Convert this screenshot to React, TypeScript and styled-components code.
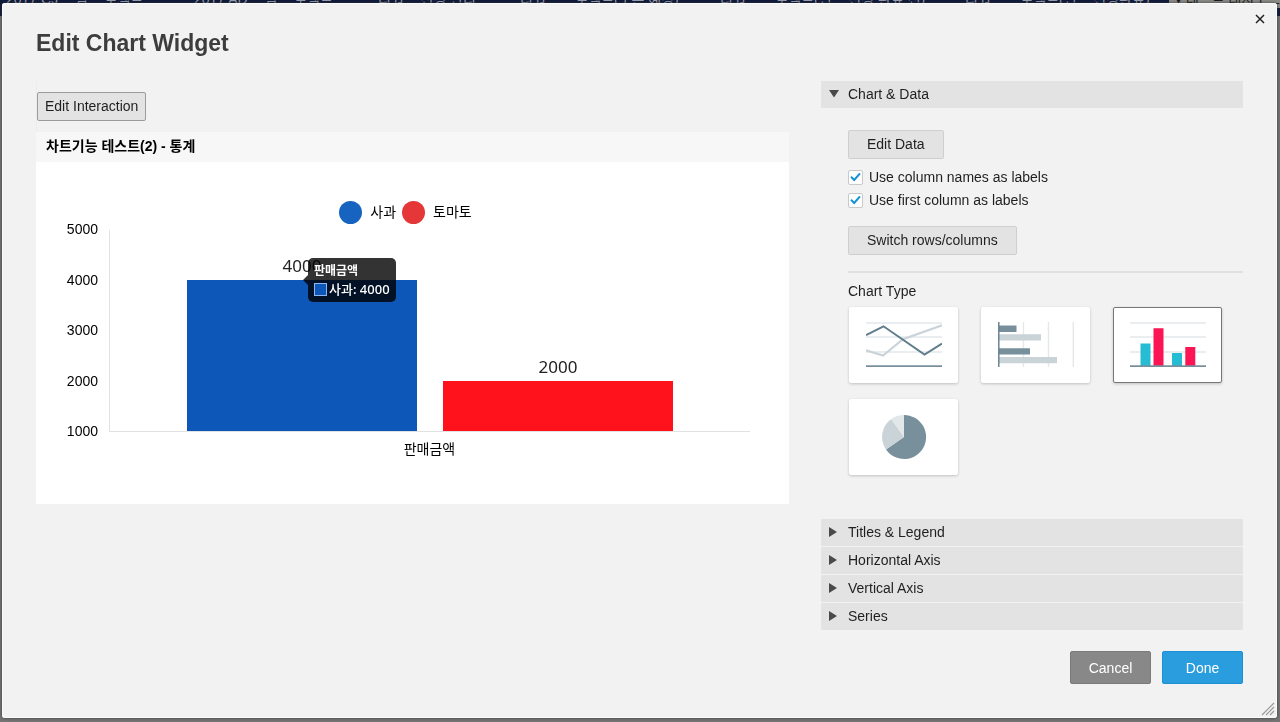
import React, { useState } from "react";
import styled, { createGlobalStyle, css } from "styled-components";

const GlobalStyle = createGlobalStyle`
  * { box-sizing: border-box; }
  body {
    margin: 0;
    background: #747474;
    color: #1f1f1f;
    font-family: "Liberation Sans", "Noto Sans CJK KR", sans-serif;
    font-size: 14px;
    line-height: 20px;
  }
  button, input { font: inherit; color: inherit; margin: 0; }
  h1, h2, h3, p { margin: 0; font-weight: normal; font-size: inherit; }
`;

const Page = styled.div`
  min-height: 100vh;
  overflow: hidden;
`;

const TabBar = styled.nav`
  display: flex;
  height: 16px;
  align-items: flex-end;
  padding-bottom: 8px;
  background: #0f1a3a;
  white-space: nowrap;
  overflow: hidden;
`;

const Tab = styled.a<{ $width: number; $active?: boolean }>`
  flex: 0 0 ${(p) => p.$width}px;
  padding-left: 6px;
  font-size: 14px;
  line-height: 18px;
  text-decoration: none;
  color: ${(p) => (p.$active ? "#1c1c1c" : "#9a9fae")};
  background: ${(p) => (p.$active ? "#8b8b88" : "transparent")};
`;

const Dialog = styled.div`
  position: fixed;
  inset: 3px 3px 4px 2px;
  overflow: hidden;
  padding: 26px 34px 32px;
  background: #f2f2f2;
  border-radius: 3px;
  box-shadow: inset 0 0 0 1px #fafafa, 0 0 3px #333333;
`;

const Title = styled.h1`
  font-size: 23px;
  line-height: 28px;
  font-weight: bold;
  color: #3d3d3d;
`;

const Close = styled.button`
  position: absolute;
  top: 8px;
  right: 9px;
  display: flex;
  padding: 3px;
  border: 0;
  background: none;
`;

const ResizeGrip = styled.svg`
  position: absolute;
  right: 2px;
  bottom: 2px;
`;

const Columns = styled.div`
  display: flex;
  gap: 32px;
  margin-top: 24px;
`;

const Preview = styled.section`
  flex: 1;
  min-width: 0;
`;

const PreviewTools = styled.div`
  padding: 11px 0;
  border-left: 1px solid #ececec;
`;

const Settings = styled.section`
  flex: 0 0 422px;
`;

const Button = styled.button<{ $compact?: boolean }>`
  height: 29px;
  padding: 0 ${(p) => (p.$compact ? 7 : 18)}px 2px;
  border: 1px solid ${(p) => (p.$compact ? "#9b9b9b" : "#cfcfcf")};
  border-radius: 2px;
  background: #e3e3e3;
`;

const ActionButton = styled.button<{ $primary?: boolean }>`
  width: 81px;
  height: 33px;
  padding: 0;
  border: 1px solid ${(p) => (p.$primary ? "#1b90d2" : "#7a7a7a")};
  border-radius: 2px;
  background: ${(p) => (p.$primary ? "#2a9ddf" : "#888888")};
  color: #ffffff;
`;

const WidgetTitle = styled.h2`
  padding: 0 10px 2px;
  background: #f7f7f7;
  color: #000000;
  font-size: 14px;
  font-weight: bold;
  line-height: 28px;
`;

const Chart = styled.div`
  padding: 38px 39px 45px 30px;
  background: #ffffff;
  color: #000000;
`;

const Legend = styled.div`
  display: flex;
  justify-content: center;
  gap: 6px;
  margin-right: 5px;
  margin-bottom: 6px;
  height: 24px;
`;

const LegendItem = styled.span`
  display: flex;
  align-items: center;
  gap: 8px;
  font-size: 14px;
  line-height: 24px;
`;

const Dot = styled.span<{ $color: string }>`
  width: 23px;
  height: 23px;
  border-radius: 50%;
  background: ${(p) => p.$color};
`;

const PlotGrid = styled.div`
  display: grid;
  grid-template-columns: 32px 1fr;
  column-gap: 11px;
`;

const Scale = styled.div`
  display: flex;
  flex-direction: column;
  justify-content: space-between;
  margin: -11px 0 -9px;
  text-align: right;
`;

const Plot = styled.div`
  display: flex;
  justify-content: center;
  align-items: flex-end;
  gap: 4%;
  height: 202px;
  border-left: 1px solid #e2e2e2;
  border-bottom: 1px solid #e2e2e2;
`;

const Bar = styled.div<{ $color: string }>`
  position: relative;
  width: 36%;
  background: ${(p) => p.$color};
`;

const BarValue = styled.span`
  position: absolute;
  bottom: 100%;
  width: 100%;
  text-align: center;
  font-family: "Noto Sans", sans-serif;
  font-size: 17px;
  line-height: 28px;
  color: #222222;
`;

const Category = styled.p`
  grid-column: 2;
  padding-top: 7px;
  text-align: center;
`;

const Tooltip = styled.div`
  position: absolute;
  z-index: 1;
  top: -22px;
  left: calc(50% + 6px);
  padding: 4px 6px;
  border-radius: 5px;
  background: rgba(0, 0, 0, 0.8);
  color: #ffffff;
  font-family: "Noto Sans", "Noto Sans CJK KR", sans-serif;
  font-size: 13px;
  font-weight: 500;
  line-height: 18px;
  white-space: nowrap;

  &::before {
    content: "";
    position: absolute;
    top: 17px;
    right: 100%;
    border: 5px solid transparent;
    border-left: 0;
    border-right-color: rgba(0, 0, 0, 0.8);
  }
`;

const TooltipTitle = styled.strong`
  display: block;
  font-size: 12px;
`;

const TooltipRow = styled.span`
  display: flex;
  align-items: center;
  gap: 2px;
`;

const Swatch = styled.i`
  width: 13px;
  height: 13px;
  border: 1px solid #8db7ee;
  background: #0c57b8;
`;

const PanelHeader = styled.button`
  display: flex;
  align-items: center;
  gap: 8px;
  width: 100%;
  height: 27px;
  padding: 0 7px 1px;
  margin-bottom: 1px;
  border: 0;
  background: #e3e3e3;
  text-align: left;
`;

const Arrow = styled.svg`
  flex: none;
`;

const PanelBody = styled.div`
  padding: 21px 0 44px 27px;
`;

const Checks = styled.div`
  display: grid;
  gap: 3px;
  padding: 8px 0 16px;
`;

const CheckLabel = styled.label`
  display: flex;
  align-items: center;
  gap: 6px;
`;

const CheckBox = styled.span`
  display: grid;
  place-items: center;

  & > * { grid-area: 1 / 1; }
  & > svg { pointer-events: none; z-index: 1; }
`;

const CheckInput = styled.input`
  appearance: none;
  width: 15px;
  height: 15px;
  border: 1px solid #c9c9c9;
  border-radius: 2px;
  background: #ffffff;
`;

const Types = styled.fieldset`
  min-width: 0;
  margin: 16px 0 0;
  padding: 8px 0 0;
  border: 0;
  border-top: 2px solid #e0e0e0;
`;

const TypeGrid = styled.div`
  display: grid;
  grid-template-columns: repeat(3, 109px);
  gap: 16px 23px;
  padding: 6px 1px 0;
`;

const TypeCard = styled.button<{ $selected: boolean }>`
  display: flex;
  align-items: center;
  justify-content: center;
  height: 76px;
  padding: 0;
  border: 1px solid #ffffff;
  border-radius: 2px;
  background: #ffffff;
  box-shadow: 0 1px 3px rgba(0, 0, 0, 0.2);
  ${(p) => p.$selected && css`border-color: #777777;`}
`;

const Footer = styled.footer`
  display: flex;
  justify-content: flex-end;
  gap: 11px;
  padding-top: 20px;
`;

const tabs = [
  { label: "2017 CJ 드림 프로젝트", width: 188 },
  { label: "2017 AD 드림 프로젝트", width: 184 },
  { label: "리워드 신청 관리", width: 142 },
  { label: "리워드 프로젝트(오픈 예정)", width: 200 },
  { label: "리워드 프로젝트(펀드 신청 완료 전)", width: 245 },
  { label: "리워드 프로젝트(펀드 신청완료)", width: 210 },
  { label: "▾ 테스트 대시보드", width: 140, active: true },
];

const MIN = 1000;
const MAX = 5000;
const ticks = [5000, 4000, 3000, 2000, 1000];
const series = [
  { name: "사과", value: 4000, color: "#0c57b8", dot: "#1763c0" },
  { name: "토마토", value: 2000, color: "#ff121c", dot: "#e53638" },
];

const DARK = "#78909c";
const LIGHT = "#c9d3d8";
const RULE = "#e3e9eb";

const Rules = () => (
  <path d="M0 1H76M0 15H76M0 30H76" stroke={RULE} strokeWidth="1.3" />
);

const chartTypes = [
  {
    id: "Line chart",
    art: (
      <>
        <Rules />
        <path d="M0 28.3L17 33.6L37 17.3L76 3.3" stroke={LIGHT} strokeWidth="2.1" />
        <path d="M0 13L17.5 4.3L58.5 32.6L76 21.6" stroke="#607d8b" strokeWidth="2" />
        <path d="M0 44.2H76" stroke={DARK} strokeWidth="1.8" />
      </>
    ),
  },
  {
    id: "Bar chart",
    art: (
      <>
        <path d="M25.5 0V45M50.5 0V45M75.3 0V45" stroke={RULE} strokeWidth="1.4" />
        <path d="M1 3.5H18.5V10H1zM1 26.3H32V32.5H1z" fill={DARK} />
        <path d="M1 12.3H43V18.5H1zM1 35H59V41.2H1z" fill={LIGHT} />
        <path d="M.8 0V45" stroke="#607d8b" strokeWidth="1.4" />
      </>
    ),
  },
  {
    id: "Column chart",
    art: (
      <>
        <Rules />
        <path d="M10.5 21.5H20.5V44H10.5zM42 31H52V44H42z" fill="#26bdd4" />
        <path d="M23.5 6.3H33.5V44H23.5zM55.3 25H65.3V44H55.3z" fill="#fc1555" />
        <path d="M0 44.2H76" stroke={DARK} strokeWidth="1.8" />
      </>
    ),
  },
  {
    id: "Pie chart",
    art: (
      <>
        <path d="M38 23V1A22 22 0 1 1 20 35.5Z" fill={DARK} />
        <path d="M38 23L20 35.5A22 22 0 0 1 25.2 5.1Z" fill={LIGHT} />
        <path d="M38 23L25.2 5.1A22 22 0 0 1 38 1Z" fill="#e2e7e9" />
      </>
    ),
  },
];

function Panel({ title, open }: { title: string; open?: boolean }) {
  return (
    <h3>
      <PanelHeader type="button" aria-expanded={!!open}>
        <Arrow width="12" height="12" viewBox="0 0 12 12" fill="#4a4a4a">
          <path d={open ? "M1 2H11L6 9.5Z" : "M1 1L9 6L1 11Z"} />
        </Arrow>
        {title}
      </PanelHeader>
    </h3>
  );
}

function Check({ label }: { label: string }) {
  const [on, setOn] = useState(true);
  return (
    <CheckLabel>
      <CheckBox>
        <CheckInput type="checkbox" checked={on} onChange={() => setOn(!on)} />
        {on && (
          <svg width="11" height="10" viewBox="0 0 11 10" fill="none" stroke="#1491d9" strokeWidth="2">
            <path d="M1 4.8L4.2 8L10 1.3" />
          </svg>
        )}
      </CheckBox>
      {label}
    </CheckLabel>
  );
}

export default function App() {
  const [type, setType] = useState("Column chart");
  return (
    <Page>
      <GlobalStyle />
      <TabBar>
        {tabs.map((t) => (
          <Tab key={t.label} href="#" $width={t.width} $active={t.active}>
            {t.label}
          </Tab>
        ))}
      </TabBar>
      <Dialog role="dialog" aria-labelledby="dialog-title">
        <Title id="dialog-title">Edit Chart Widget</Title>
        <Close type="button" aria-label="Close">
          <svg width="10" height="10" viewBox="0 0 10 10" stroke="#222222" strokeWidth="1.5">
            <path d="M1 1L9 9M9 1L1 9" />
          </svg>
        </Close>
        <Columns>
          <Preview>
            <PreviewTools>
              <Button type="button" $compact>Edit Interaction</Button>
            </PreviewTools>
            <WidgetTitle>차트기능 테스트(2) - 통계</WidgetTitle>
            <Chart>
              <Legend>
                {series.map((s) => (
                  <LegendItem key={s.name}>
                    <Dot $color={s.dot} />
                    {s.name}
                  </LegendItem>
                ))}
              </Legend>
              <PlotGrid>
                <Scale>
                  {ticks.map((t) => (
                    <span key={t}>{t}</span>
                  ))}
                </Scale>
                <Plot>
                  {series.map((s, i) => (
                    <Bar
                      key={s.name}
                      $color={s.color}
                      style={{ height: `${((s.value - MIN) / (MAX - MIN)) * 100}%` }}
                    >
                      <BarValue>{s.value}</BarValue>
                      {i === 0 && (
                        <Tooltip role="tooltip">
                          <TooltipTitle>판매금액</TooltipTitle>
                          <TooltipRow>
                            <Swatch />
                            {s.name}: {s.value}
                          </TooltipRow>
                        </Tooltip>
                      )}
                    </Bar>
                  ))}
                </Plot>
                <Category>판매금액</Category>
              </PlotGrid>
            </Chart>
          </Preview>
          <Settings>
            <Panel title="Chart & Data" open />
            <PanelBody>
              <Button type="button">Edit Data</Button>
              <Checks>
                <Check label="Use column names as labels" />
                <Check label="Use first column as labels" />
              </Checks>
              <Button type="button">Switch rows/columns</Button>
              <Types aria-labelledby="chart-type">
                <p id="chart-type">Chart Type</p>
                <TypeGrid>
                  {chartTypes.map((c) => (
                    <TypeCard
                      key={c.id}
                      type="button"
                      aria-label={c.id}
                      aria-pressed={c.id === type}
                      $selected={c.id === type}
                      onClick={() => setType(c.id)}
                    >
                      <svg width="76" height="46" viewBox="0 0 76 46" fill="none">{c.art}</svg>
                    </TypeCard>
                  ))}
                </TypeGrid>
              </Types>
            </PanelBody>
            <Panel title="Titles & Legend" />
            <Panel title="Horizontal Axis" />
            <Panel title="Vertical Axis" />
            <Panel title="Series" />
          </Settings>
        </Columns>
        <Footer>
          <ActionButton type="button">Cancel</ActionButton>
          <ActionButton type="button" $primary>Done</ActionButton>
        </Footer>
        <ResizeGrip width="14" height="14" viewBox="0 0 14 14" stroke="#999999" strokeWidth="1.2">
          <path d="M1 13L13 1M5 13L13 5M9 13L13 9" />
        </ResizeGrip>
      </Dialog>
    </Page>
  );
}
